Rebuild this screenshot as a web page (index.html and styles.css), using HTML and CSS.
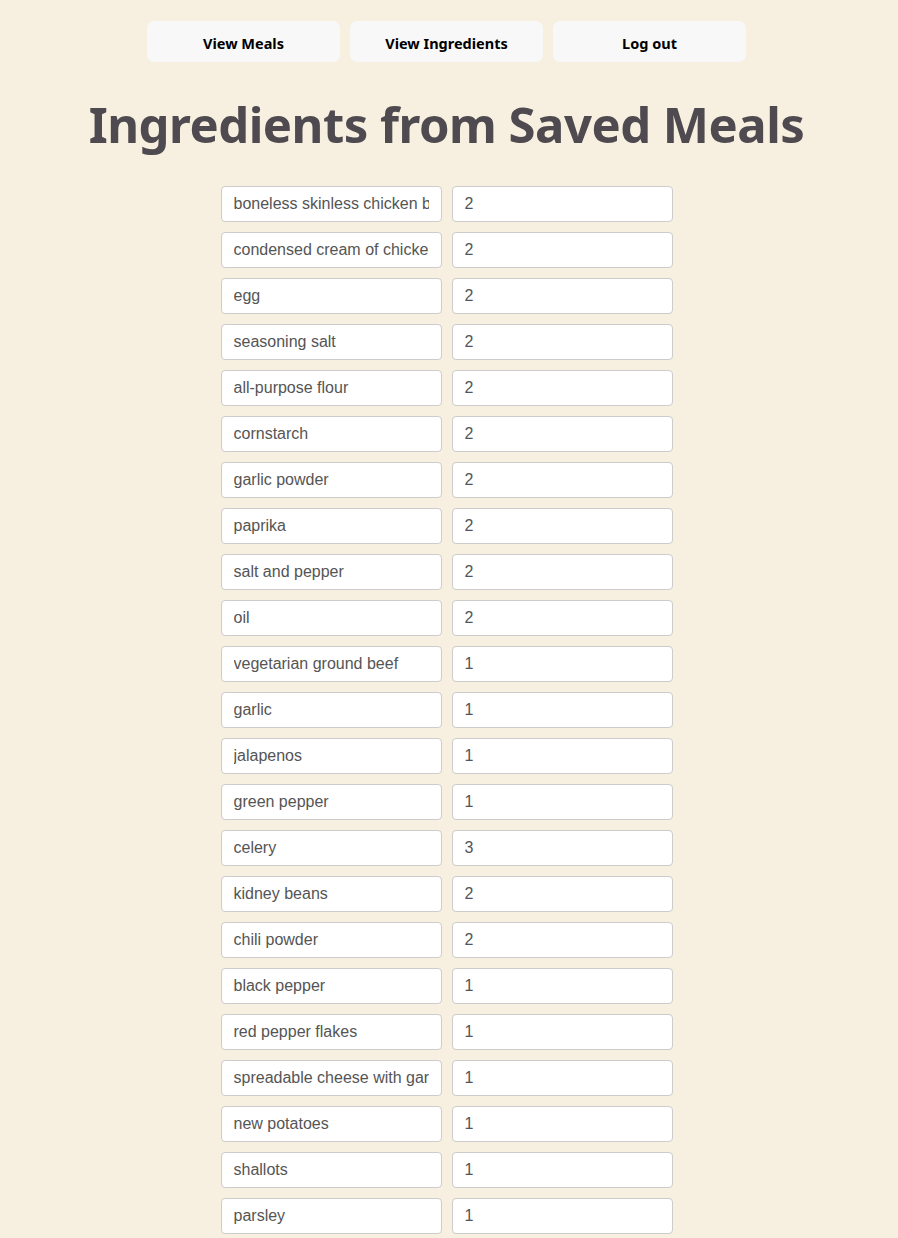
FILE: index.html
```html
<!DOCTYPE html>
<html>
<head>
<meta charset="utf-8">
<link rel="stylesheet" href="styles.css">
</head>
<body>
<nav class="nav">
  <button class="nav-btn">View Meals</button>
  <button class="nav-btn">View Ingredients</button>
  <button class="nav-btn">Log out</button>
</nav>
<h1 class="title">Ingredients from Saved Meals</h1>
<div class="list">
  <div class="row"><input class="field" value="boneless skinless chicken breasts"><input class="field" value="2"></div>
  <div class="row"><input class="field" value="condensed cream of chicken soup"><input class="field" value="2"></div>
  <div class="row"><input class="field" value="egg"><input class="field" value="2"></div>
  <div class="row"><input class="field" value="seasoning salt"><input class="field" value="2"></div>
  <div class="row"><input class="field" value="all-purpose flour"><input class="field" value="2"></div>
  <div class="row"><input class="field" value="cornstarch"><input class="field" value="2"></div>
  <div class="row"><input class="field" value="garlic powder"><input class="field" value="2"></div>
  <div class="row"><input class="field" value="paprika"><input class="field" value="2"></div>
  <div class="row"><input class="field" value="salt and pepper"><input class="field" value="2"></div>
  <div class="row"><input class="field" value="oil"><input class="field" value="2"></div>
  <div class="row"><input class="field" value="vegetarian ground beef"><input class="field" value="1"></div>
  <div class="row"><input class="field" value="garlic"><input class="field" value="1"></div>
  <div class="row"><input class="field" value="jalapenos"><input class="field" value="1"></div>
  <div class="row"><input class="field" value="green pepper"><input class="field" value="1"></div>
  <div class="row"><input class="field" value="celery"><input class="field" value="3"></div>
  <div class="row"><input class="field" value="kidney beans"><input class="field" value="2"></div>
  <div class="row"><input class="field" value="chili powder"><input class="field" value="2"></div>
  <div class="row"><input class="field" value="black pepper"><input class="field" value="1"></div>
  <div class="row"><input class="field" value="red pepper flakes"><input class="field" value="1"></div>
  <div class="row"><input class="field" value="spreadable cheese with garlic and herbs"><input class="field" value="1"></div>
  <div class="row"><input class="field" value="new potatoes"><input class="field" value="1"></div>
  <div class="row"><input class="field" value="shallots"><input class="field" value="1"></div>
  <div class="row"><input class="field" value="parsley"><input class="field" value="1"></div>
  <div class="row"><input class="field" value="butter"><input class="field" value="1"></div>
</div>
</body>
</html>
```
FILE: styles.css
```css
html, body {
  margin: 0;
  padding: 0;
  background: #f7efdf;
}
body {
  padding: 21px 5px 0 0;
  font-family: "Noto Sans", "Open Sans", sans-serif;
}
.nav {
  display: flex;
  justify-content: center;
  gap: 10px;
}
.nav-btn {
  width: 193px;
  height: 41px;
  border: none;
  border-radius: 7px;
  background: #f8f8f8;
  color: #000;
  font-family: "Noto Sans", sans-serif;
  font-weight: 700;
  font-size: 14.5px;
  padding: 2px 0 0;
}
.title {
  margin: 28px 0 28px;
  text-align: center;
  color: #4e4a4f;
  font-size: 49px;
  font-weight: 700;
  line-height: 68px;
  letter-spacing: -0.5px;
}
.list {
  display: flex;
  flex-direction: column;
  align-items: center;
  gap: 10px;
}
.row {
  display: flex;
  gap: 10px;
}
.field {
  box-sizing: border-box;
  width: 221px;
  height: 36px;
  margin: 0;
  padding: 0 12px;
  border: 1px solid #cccccc;
  border-radius: 4px;
  background: #fff;
  color: #555;
  font-family: "Liberation Sans", Arial, sans-serif;
  font-size: 16px;
}
```
